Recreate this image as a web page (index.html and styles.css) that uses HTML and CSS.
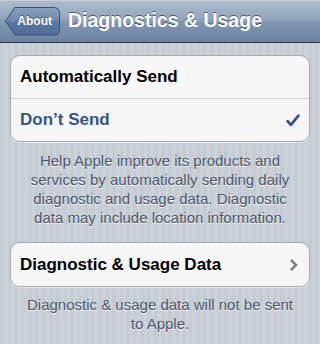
FILE: index.html
```html
<!DOCTYPE html>
<html>
<head>
<meta charset="utf-8">
<link rel="stylesheet" href="styles.css">
</head>
<body>
<header class="navbar">
  <a class="back"><span class="back-inner">About</span></a>
  <h1 class="title">Diagnostics &amp; Usage</h1>
</header>
<main class="content">
  <section class="group">
    <div class="row">
      <span class="label">Automatically Send</span>
    </div>
    <div class="row">
      <span class="label selected">Don’t Send</span>
      <svg class="check" width="14" height="13" viewBox="0 0 14 13"><path d="M1.6 7.2 L5 10.8 L12.4 1.6" fill="none" stroke="#385487" stroke-width="2.7" stroke-linecap="round" stroke-linejoin="round"/></svg>
    </div>
  </section>
  <p class="footer">Help Apple improve its products and services by automatically sending daily diagnostic and usage data. Diagnostic data may include location information.</p>
  <section class="group second">
    <div class="row">
      <span class="label">Diagnostic &amp; Usage Data</span>
      <svg class="chevron" width="8" height="12" viewBox="0 0 8 12"><path d="M1.8 1.8 L6 6 L1.8 10.2" fill="none" stroke="#7f7f7f" stroke-width="2.6" stroke-linecap="square" stroke-linejoin="miter"/></svg>
    </div>
  </section>
  <p class="footer footer-last">Diagnostic &amp; usage data will not be sent to Apple.</p>
</main>
</body>
</html>
```
FILE: styles.css
```css
html, body {
  margin: 0;
  padding: 0;
}
body {
  width: 320px;
  height: 344px;
  overflow: hidden;
  font-family: "Liberation Sans", Helvetica, Arial, sans-serif;
  background: repeating-linear-gradient(90deg, #c5ccd4 0, #c5ccd4 4px, #cbd2d8 4px, #cbd2d8 7px);
}
.navbar {
  height: 42px;
  border-bottom: 1px solid #2d3642;
  background: linear-gradient(#b0bdce 0%, #93a5bc 45%, #8095b0 55%, #6c83a2 100%);
  box-shadow: inset 0 1px 0 #c6cfda;
  display: flex;
  align-items: center;
  padding-left: 5px;
}
.back {
  display: block;
  width: 55px;
  height: 29px;
  box-sizing: border-box;
  padding: 1px;
  background: #3a5276;
  border-radius: 0 6px 6px 0;
  clip-path: polygon(10px 0, 100% 0, 100% 100%, 10px 100%, 0 50%);
}
.back-inner {
  display: flex;
  align-items: center;
  justify-content: flex-end;
  height: 27px;
  padding-right: 7px;
  box-sizing: border-box;
  background: linear-gradient(#8aa1be 0%, #6c88ad 48%, #5877a1 52%, #4e6e9a 100%);
  border-radius: 0 5px 5px 0;
  clip-path: polygon(9.4px 0, 100% 0, 100% 100%, 9.4px 100%, 0 50%);
  color: #fff;
  font-weight: bold;
  font-size: 12px;
  text-shadow: 0 -1px 0 rgba(0, 0, 0, 0.45);
}
.title {
  margin: 0 0 0 8px;
  font-size: 19.5px;
  font-weight: bold;
  color: #fff;
  text-shadow: 0 -1px 0 rgba(0, 0, 0, 0.5);
  line-height: 1;
  white-space: nowrap;
}
.content {
  padding-top: 12px;
}
.group {
  margin: 0 10px;
  background: #f7f7f7;
  border: 1px solid #a6aaae;
  border-radius: 10px;
  box-shadow: 0 1px 0 rgba(255, 255, 255, 0.6);
}
.row {
  height: 42px;
  display: flex;
  align-items: center;
  justify-content: space-between;
  padding: 0 10px 0 9px;
}
.row + .row {
  border-top: 1px solid #d2d2d2;
}
.second .row {
  height: 43px;
}
.label {
  font-size: 17px;
  font-weight: bold;
  color: #000;
}
.label.selected {
  color: #385487;
}
.check {
  margin-right: -1px;
}
.chevron {
  margin-right: 1px;
}
.footer {
  margin: 0 0 15px;
  padding: 9px 24px 0;
  text-align: center;
  font-size: 15px;
  line-height: 19px;
  color: #4c566c;
  text-shadow: 0 1px 0 rgba(255, 255, 255, 0.8);
}
.footer-last {
  padding-top: 8px;
}
```
